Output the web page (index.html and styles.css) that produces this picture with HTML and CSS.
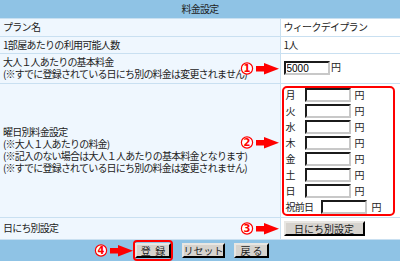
FILE: index.html
```html
<!DOCTYPE html>
<html lang="ja">

<head>
    <meta charset="UTF-8">
    <title>料金設定</title>
    <link rel="stylesheet" href="styles.css">
</head>

<body>
    <table class="rate-table">
        <colgroup>
            <col class="col-label">
            <col class="col-value">
        </colgroup>
        <tr>
            <th colspan="2" class="head">料金設定</th>
        </tr>
        <tr class="row-plan">
            <td class="label">プラン名</td>
            <td class="value">ウィークデイプラン</td>
        </tr>
        <tr class="row-people">
            <td class="label">1部屋あたりの利用可能人数</td>
            <td class="value">1人</td>
        </tr>
        <tr class="row-base">
            <td class="label">
                <div class="label-inner">
                    <div class="label-text">大人１人あたりの基本料金<br>(※すでに登録されている日にち別の料金は変更されません)</div>
                    <svg class="mark" width="40" height="15" viewBox="0 0 40 15">
                        <circle cx="7" cy="7.5" r="5.6" fill="#fff" stroke="#f00" stroke-width="1.2" />
                        <text x="7" y="11" text-anchor="middle">1</text>
                        <rect x="16" y="5" width="9" height="5.5" fill="#f00" />
                        <polygon points="24,2 39,7.75 24,13.5" fill="#f00" />
                    </svg>
                </div>
            </td>
            <td class="value">
                <input type="text" class="price" value="5000"> 円
            </td>
        </tr>
        <tr class="row-week">
            <td class="label">
                <div class="label-inner">
                    <div class="label-text">曜日別料金設定<br>(※大人１人あたりの料金)<br>(※記入のない場合は大人１人あたりの基本料金となります)<br>(※すでに登録されている日にち別の料金は変更されません)</div>
                    <svg class="mark mark-week" width="40" height="15" viewBox="0 0 40 15">
                        <circle cx="7" cy="7.5" r="5.6" fill="#fff" stroke="#f00" stroke-width="1.2" />
                        <text x="7" y="11" text-anchor="middle">2</text>
                        <rect x="16" y="5" width="9" height="5.5" fill="#f00" />
                        <polygon points="24,2 39,7.75 24,13.5" fill="#f00" />
                    </svg>
                </div>
            </td>
            <td class="value week-cell">
                <div class="week-box">
                    <div class="day"><span class="day-name">月</span><input type="text" class="price"><span>円</span></div>
                    <div class="day"><span class="day-name">火</span><input type="text" class="price"><span>円</span></div>
                    <div class="day"><span class="day-name">水</span><input type="text" class="price"><span>円</span></div>
                    <div class="day"><span class="day-name">木</span><input type="text" class="price"><span>円</span></div>
                    <div class="day"><span class="day-name">金</span><input type="text" class="price"><span>円</span></div>
                    <div class="day"><span class="day-name">土</span><input type="text" class="price"><span>円</span></div>
                    <div class="day"><span class="day-name">日</span><input type="text" class="price"><span>円</span></div>
                    <div class="day"><span class="day-name">祝前日</span><input type="text" class="price"><span>円</span></div>
                </div>
            </td>
        </tr>
        <tr class="row-daily">
            <td class="label">
                <div class="label-inner">
                    <div class="label-text">日にち別設定</div>
                    <svg class="mark" width="40" height="15" viewBox="0 0 40 15">
                        <circle cx="7" cy="7.5" r="5.6" fill="#fff" stroke="#f00" stroke-width="1.2" />
                        <text x="7" y="11" text-anchor="middle">3</text>
                        <rect x="16" y="5" width="9" height="5.5" fill="#f00" />
                        <polygon points="24,2 39,7.75 24,13.5" fill="#f00" />
                    </svg>
                </div>
            </td>
            <td class="value">
                <button class="btn btn-daily">日にち別設定</button>
            </td>
        </tr>
    </table>

    <div class="footer">
        <div class="submit-box">
            <svg class="mark mark-submit" width="40" height="15" viewBox="0 0 40 15">
                <circle cx="7" cy="7.5" r="5.6" fill="#fff" stroke="#f00" stroke-width="1.2" />
                <text x="7" y="11" text-anchor="middle">4</text>
                <rect x="16" y="5" width="9" height="5.5" fill="#f00" />
                <polygon points="24,2 39,7.75 24,13.5" fill="#f00" />
            </svg>
            <button class="btn btn-submit">登&nbsp;&nbsp;録</button>
        </div>
        <button class="btn btn-reset">リセット</button>
        <button class="btn btn-back">戻&nbsp;る</button>
    </div>
</body>

</html>
```

FILE: styles.css
```css
/* 基本 */
* {
    margin: 0;
    padding: 0;
    box-sizing: border-box;
}

body {
    width: 400px;
    height: 261px;
    overflow: hidden;
    background: #8fc3e5;
    font-family: "Noto Sans CJK JP", sans-serif;
    font-size: 10px;
    line-height: 11.8px;
    letter-spacing: -0.7px;
    color: #222;
    white-space: nowrap;
}

/* テーブル */
.rate-table {
    width: 400px;
    border-collapse: collapse;
    background: #fff;
    table-layout: fixed;
}

.col-label {
    width: 280px;
}

.col-value {
    width: 120px;
}

.rate-table td {
    border: 1px solid #c9e0f1;
    overflow: hidden;
}

.head {
    height: 18px;
    background: #8fc3e5;
    font-weight: normal;
    text-align: center;
    border-bottom: 1px solid #c9e0f1;
}

.label {
    padding-left: 3px;
    background: #eff7fe;
    border-left: none !important;
}

.value {
    padding-left: 3px;
    background: #fff;
    border-right: none !important;
}

.row-plan td {
    height: 18px;
}

.row-people td {
    height: 17px;
}

.row-base td {
    height: 30px;
}

.row-week td {
    height: 134px;
}

.row-daily td {
    height: 22px;
}

.label-inner {
    display: flex;
    align-items: center;
}

/* 文字は注釈マークの下へはみ出してよい */
.label-text {
    flex: 1;
    min-width: 0;
    letter-spacing: -0.8px;
}

/* 注釈マーク */
.mark {
    flex-shrink: 0;
    display: block;
    position: relative;
}

.mark text {
    font-family: "DejaVu Sans", sans-serif;
    font-size: 10px;
    font-weight: bold;
    letter-spacing: 0;
    fill: #f00;
}

.mark-week {
    margin-bottom: 16px;
}

/* 入力欄 */
.price {
    width: 46px;
    height: 14px;
    border: 2px inset #c8c8c8;
    border-top-color: #707070;
    border-left-color: #707070;
    font-family: "Liberation Sans", sans-serif;
    font-size: 10px;
    letter-spacing: 0;
    padding: 0 1px;
    vertical-align: middle;
}

.week-cell {
    padding-top: 2px;
    padding-left: 1px;
    vertical-align: top;
}

.week-box {
    width: 113px;
    border: 2px solid #f00;
    border-radius: 5px;
    display: flex;
    flex-direction: column;
    gap: 2px;
    padding: 0 0 0 2px;
}

.day {
    display: flex;
    align-items: center;
    height: 14px;
}

.day-name {
    min-width: 19px;
    padding-right: 8px;
}

.day .price {
    margin-right: 4px;
}

/* ボタン */
.btn {
    height: 15px;
    background: #d6d3ce;
    border: 2px outset #e8e6e2;
    border-right-color: #404040;
    border-bottom-color: #404040;
    font-family: "Noto Sans CJK JP", sans-serif;
    font-size: 10px;
    line-height: 11px;
    letter-spacing: 0;
    color: #222;
    display: flex;
    align-items: center;
    justify-content: center;
}

.btn-daily {
    width: 81px;
    margin-top: 1px;
}

.footer {
    height: 22px;
    display: flex;
    align-items: center;
    justify-content: center;
    gap: 9px;
    padding-left: 2px;
}

.submit-box {
    position: relative;
    border: 2px solid #f00;
    border-radius: 4px;
    padding: 1px 0;
    height: 21px;
    display: flex;
    align-items: center;
}

.mark-submit {
    position: absolute;
    right: 100%;
    top: 1px;
    margin-right: 1px;
}

.btn-submit {
    width: 36px;
}

.btn-reset {
    width: 43px;
}

.btn-back {
    width: 35px;
}
```
